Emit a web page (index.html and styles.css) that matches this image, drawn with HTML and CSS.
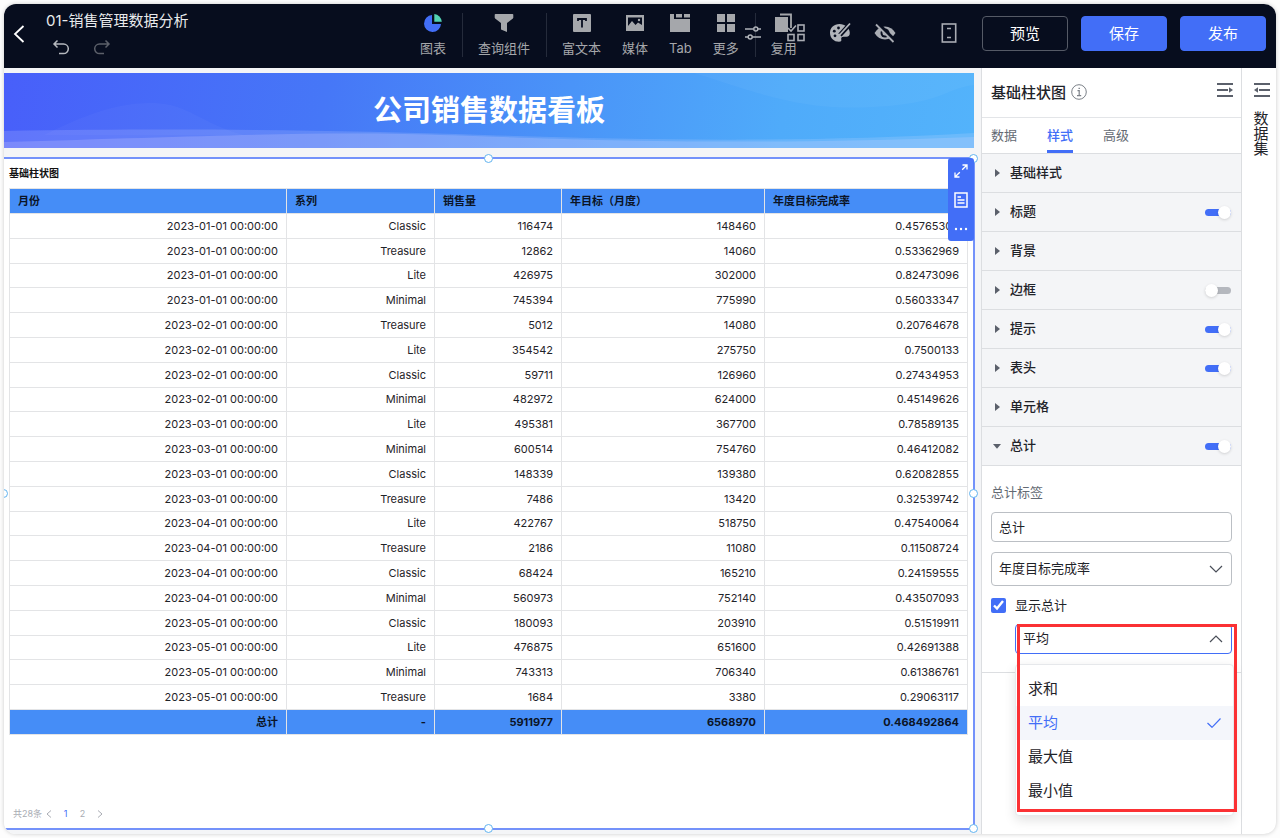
FILE: index.html
```html
<!DOCTYPE html>
<html lang="zh-CN">
<head>
    <meta charset="UTF-8">
    <meta name="viewport" content="width=device-width, initial-scale=1.0">
    <title>01-销售管理数据分析</title>
    <link rel="stylesheet" href="styles.css">
</head>
<body>
    <div class="window">
        <header class="topbar">
            <div class="topbar-left">
                <button class="icon-btn" aria-label="返回">
                    <svg width="12" height="20" viewBox="0 0 12 20" fill="none" stroke="#fff" stroke-width="1.8"><path d="M10.5 2 2 10l8.500 8"/></svg>
                </button>
                <div class="doc">
                    <h1>01-销售管理数据分析</h1>
                    <div class="history">
                        <button class="icon-btn" aria-label="撤销">
                            <svg width="18" height="18" viewBox="0 0 18 18" fill="none" stroke="#b5b8be" stroke-width="1.500"><path d="M5.500 1.500 2 5l3.500 3.500M2 5h9.500a4.800 4.800 0 0 1 0 9.600H7"/></svg>
                        </button>
                        <button class="icon-btn" aria-label="重做">
                            <svg width="18" height="18" viewBox="0 0 18 18" fill="none" stroke="#5c606a" stroke-width="1.500"><path d="M12.500 1.500 16 5l-3.500 3.500M16 5H6.500a4.800 4.800 0 0 0 0 9.600H11"/></svg>
                        </button>
                    </div>
                </div>
            </div>

            <nav class="insert">
                <button class="insert-btn">
                    <svg width="20" height="20" viewBox="0 0 20 20"><path d="M9 2a8.500 8.500 0 1 0 9 9H9z" fill="#426ef7"/><path d="M11.300 1a8.500 8.500 0 0 1 7.500 7.700h-7.500z" fill="#52d3b4"/></svg>
                    图表
                </button>
                <span class="divider"></span>
                <button class="insert-btn">
                    <svg width="20" height="20" viewBox="0 0 20 20" fill="#a5a7ab"><path d="M1.500 1h17q.8 0 .8.800v2.700q0 .5-.4.900L13 10v9l-6-2.500V10L1.100 5.400q-.4-.4-.4-.9V1.800q0-.8.800-.8z"/></svg>
                    查询组件
                </button>
                <span class="divider"></span>
                <button class="insert-btn">
                    <svg width="20" height="20" viewBox="0 0 20 20"><rect x="1" y="1" width="18" height="18" rx="1" fill="#a5a7ab"/><path d="M6 8V6h8v2M10 6v8.500" fill="none" stroke="#070d1e" stroke-width="1.800"/></svg>
                    富文本
                </button>
                <button class="insert-btn">
                    <svg width="20" height="20" viewBox="0 0 20 20"><rect x="1" y="2" width="18" height="16" fill="#a5a7ab"/><path d="M3 4.500h14V12l-4-2.500-2.500 2.500L7 8l-4 5z" fill="#070d1e"/><circle cx="14" cy="7" r="1.200" fill="#a5a7ab"/></svg>
                    媒体
                </button>
                <button class="insert-btn">
                    <svg width="22" height="20" viewBox="0 0 22 20" fill="#a5a7ab"><path d="M1 1h4v5h16v13H1z"/><path d="M7 1h6v3.500H7zM15 1h6v3.500h-6z"/></svg>
                    Tab
                </button>
                <button class="insert-btn">
                    <svg width="20" height="20" viewBox="0 0 20 20" fill="#a5a7ab"><path d="M1 1h8v8H1zM11 1h8v8h-8zM1 11h8v8H1zM11 11h8v8h-8z"/></svg>
                    更多
                </button>
                <span class="divider"></span>
                <button class="insert-btn">
                    <svg width="20" height="20" viewBox="0 0 20 20"><rect x="1" y="4" width="13" height="15" fill="#a5a7ab"/><path d="M6 1.500h11V15" fill="none" stroke="#a5a7ab" stroke-width="1.800"/></svg>
                    复用
                </button>
            </nav>

            <div class="tools">
                <button class="icon-btn" aria-label="筛选设置">
                    <svg width="20" height="20" viewBox="0 0 20 20" fill="none" stroke="#b0b3b9" stroke-width="1.500"><path d="M2 6h8.500M15 6h3M2 14h3M9.500 14H18"/><circle cx="12.800" cy="6" r="2"/><circle cx="7.200" cy="14" r="2"/></svg>
                </button>
                <button class="icon-btn" aria-label="批量操作">
                    <svg width="20" height="20" viewBox="0 0 20 20" fill="none" stroke="#a9acb3" stroke-width="1.600"><path d="M2 5l3 3 5-5.500"/><rect x="12" y="2" width="6" height="6"/><rect x="2" y="11.500" width="6" height="6"/><rect x="12" y="11.500" width="6" height="6"/></svg>
                </button>
                <button class="icon-btn" aria-label="主题">
                    <svg width="22" height="22" viewBox="0 0 22 22"><path d="M10.500 2C5 2 1 5.600 1 11c0 5 4 8.800 9 8.800 2 0 2.600-1 2.300-2.300-.4-1.800.4-2.800 2.200-2.800h3c2 0 3.500-1.600 3.300-4C20.500 5.500 16 2 10.500 2z" fill="#b0b3b9"/><path d="M20.500 2.500 11 13" stroke="#070d1e" stroke-width="4.500"/><path d="M21 1.500 11.500 12l-2.500 2.500" stroke="#b0b3b9" stroke-width="1.800"/><g fill="#070d1e"><circle cx="5.300" cy="9.200" r="1.400"/><circle cx="9.500" cy="6" r="1.400"/><circle cx="6" cy="13.800" r="1.400"/></g></svg>
                </button>
                <button class="icon-btn" aria-label="隐藏">
                    <svg width="22" height="20" viewBox="0 0 22 20"><path d="M.500 10Q4.500 3.500 11 3.500T21.500 10Q17.500 16.500 11 16.500T.5 10z" fill="#a9acb3"/><circle cx="11" cy="10" r="4.500" fill="#070d1e"/><circle cx="11" cy="10" r="2.500" fill="#a9acb3"/><path d="M3.500.5 20.500 17.500" stroke="#070d1e" stroke-width="4"/><path d="M2 1.500 19.500 19" stroke="#a9acb3" stroke-width="1.800"/></svg>
                </button>
                <button class="icon-btn device" aria-label="移动端">
                    <svg width="20" height="20" viewBox="0 0 20 20" fill="none" stroke="#a9acb3" stroke-width="1.600"><rect x="3.300" y="1" width="13.400" height="18"/><path d="M8 5.500h4M8 14.500h4"/></svg>
                </button>
                <div class="actions">
                    <button class="btn btn-outline">预览</button>
                    <button class="btn btn-primary">保存</button>
                    <button class="btn btn-primary">发布</button>
                </div>
            </div>
        </header>

        <div class="workspace">
            <main class="canvas">
                <div class="banner">
                    <svg class="banner-waves" viewBox="0 0 970 75" preserveAspectRatio="none">
                        <path d="M40 62C80 42 115 29 150 30S195 50 240 62z" fill="#fff" opacity=".03"/>
                        <path d="M0 58C180 55 330 57 480 62S800 70 970 60V75H0z" fill="#dfe2ff" opacity=".17"/>
                        <path d="M0 69C180 64 290 59 400 61S680 75 970 64V75H0z" fill="#e4dcff" opacity=".2"/>
                        <path d="M690 0C760 22 800 38 870 34S940 16 970 12V0z" fill="#fff" opacity=".04"/>
                    </svg>
                    <h2>公司销售数据看板</h2>
                </div>

                <section class="widget">
                    <h3>基础柱状图</h3>
                    <table class="grid">
                        <colgroup>
                            <col class="col-month">
                            <col class="col-series">
                            <col class="col-sales">
                            <col class="col-goal">
                            <col class="col-rate">
                        </colgroup>
                        <thead>
                            <tr><th>月份</th><th>系列</th><th>销售量</th><th>年目标（月度）</th><th>年度目标完成率</th></tr>
                        </thead>
                        <tbody>
                            <tr><td>2023-01-01 00:00:00</td><td>Classic</td><td>116474</td><td>148460</td><td>0.45765306</td></tr>
                            <tr><td>2023-01-01 00:00:00</td><td>Treasure</td><td>12862</td><td>14060</td><td>0.53362969</td></tr>
                            <tr><td>2023-01-01 00:00:00</td><td>Lite</td><td>426975</td><td>302000</td><td>0.82473096</td></tr>
                            <tr><td>2023-01-01 00:00:00</td><td>Minimal</td><td>745394</td><td>775990</td><td>0.56033347</td></tr>
                            <tr><td>2023-02-01 00:00:00</td><td>Treasure</td><td>5012</td><td>14080</td><td>0.20764678</td></tr>
                            <tr><td>2023-02-01 00:00:00</td><td>Lite</td><td>354542</td><td>275750</td><td>0.7500133</td></tr>
                            <tr><td>2023-02-01 00:00:00</td><td>Classic</td><td>59711</td><td>126960</td><td>0.27434953</td></tr>
                            <tr><td>2023-02-01 00:00:00</td><td>Minimal</td><td>482972</td><td>624000</td><td>0.45149626</td></tr>
                            <tr><td>2023-03-01 00:00:00</td><td>Lite</td><td>495381</td><td>367700</td><td>0.78589135</td></tr>
                            <tr><td>2023-03-01 00:00:00</td><td>Minimal</td><td>600514</td><td>754760</td><td>0.46412082</td></tr>
                            <tr><td>2023-03-01 00:00:00</td><td>Classic</td><td>148339</td><td>139380</td><td>0.62082855</td></tr>
                            <tr><td>2023-03-01 00:00:00</td><td>Treasure</td><td>7486</td><td>13420</td><td>0.32539742</td></tr>
                            <tr><td>2023-04-01 00:00:00</td><td>Lite</td><td>422767</td><td>518750</td><td>0.47540064</td></tr>
                            <tr><td>2023-04-01 00:00:00</td><td>Treasure</td><td>2186</td><td>11080</td><td>0.11508724</td></tr>
                            <tr><td>2023-04-01 00:00:00</td><td>Classic</td><td>68424</td><td>165210</td><td>0.24159555</td></tr>
                            <tr><td>2023-04-01 00:00:00</td><td>Minimal</td><td>560973</td><td>752140</td><td>0.43507093</td></tr>
                            <tr><td>2023-05-01 00:00:00</td><td>Classic</td><td>180093</td><td>203910</td><td>0.51519911</td></tr>
                            <tr><td>2023-05-01 00:00:00</td><td>Lite</td><td>476875</td><td>651600</td><td>0.42691388</td></tr>
                            <tr><td>2023-05-01 00:00:00</td><td>Minimal</td><td>743313</td><td>706340</td><td>0.61386761</td></tr>
                            <tr><td>2023-05-01 00:00:00</td><td>Treasure</td><td>1684</td><td>3380</td><td>0.29063117</td></tr>
                        </tbody>
                        <tfoot>
                            <tr><td>总计</td><td>-</td><td>5911977</td><td>6568970</td><td>0.468492864</td></tr>
                        </tfoot>
                    </table>

                    <div class="pager">
                        <span class="count">共28条</span>
                        <button aria-label="上一页"><svg width="6" height="8" viewBox="0 0 6 8" fill="none" stroke="#a9acb3"><path d="M5 .5 1 4l4 3.500"/></svg></button>
                        <button class="current">1</button>
                        <button>2</button>
                        <button aria-label="下一页"><svg width="6" height="8" viewBox="0 0 6 8" fill="none" stroke="#a9acb3"><path d="M1 .5 5 4 1 7.500"/></svg></button>
                    </div>

                    <span class="handle top center"></span>
                    <span class="handle top right"></span>
                    <span class="handle middle left"></span>
                    <span class="handle middle right"></span>
                    <span class="handle bottom center"></span>
                    <span class="handle bottom right"></span>

                    <div class="widget-tools">
                        <button class="icon-btn" aria-label="放大">
                            <svg width="14" height="14" viewBox="0 0 14 14" fill="none" stroke="#fff" stroke-width="1.300"><path d="M8.500 1H13v4.500M13 1 8.200 5.800M1 8.500V13h4.500M1 13l4.800-4.800"/></svg>
                        </button>
                        <button class="icon-btn" aria-label="查看数据">
                            <svg width="14" height="16" viewBox="0 0 14 16" fill="none" stroke="#fff" stroke-width="1.500"><rect x="1" y="1" width="12" height="14"/><path d="M3.500 5h3.500M3.500 8h7M3.500 11h7"/></svg>
                        </button>
                        <button class="icon-btn" aria-label="更多">
                            <svg width="14" height="14" viewBox="0 0 14 14" fill="#fff"><circle cx="2" cy="8" r="1.200"/><circle cx="7" cy="8" r="1.200"/><circle cx="12" cy="8" r="1.200"/></svg>
                        </button>
                    </div>
                </section>
            </main>

            <aside class="panel">
                <div class="panel-header">
                    <h2>基础柱状图</h2>
                    <svg width="16" height="16" viewBox="0 0 16 16" fill="none" stroke="#7b8088"><circle cx="8" cy="8" r="7.300"/><path d="M6.500 6.700h1.700v5M6 11.700h4.200M7.500 4.300h1.400" stroke-width="1.200"/></svg>
                    <button class="icon-btn collapse" aria-label="收起">
                        <svg width="16" height="14" viewBox="0 0 16 14"><path d="M0 1h16M0 7h11M0 13h16" stroke="#5b606b" stroke-width="2"/><path d="M12 4.300 16 7l-4 2.700z" fill="#5b606b"/></svg>
                    </button>
                </div>
                <nav class="tabs">
                    <button>数据</button>
                    <button class="active">样式</button>
                    <button>高级</button>
                </nav>

                <div class="section"><i class="caret"></i><span>基础样式</span></div>
                <div class="section"><i class="caret"></i><label for="swTitle">标题</label><input type="checkbox" class="switch" id="swTitle" checked></div>
                <div class="section"><i class="caret"></i><span>背景</span></div>
                <div class="section"><i class="caret"></i><label for="swBorder">边框</label><input type="checkbox" class="switch" id="swBorder"></div>
                <div class="section"><i class="caret"></i><label for="swTip">提示</label><input type="checkbox" class="switch" id="swTip" checked></div>
                <div class="section"><i class="caret"></i><label for="swHead">表头</label><input type="checkbox" class="switch" id="swHead" checked></div>
                <div class="section"><i class="caret"></i><span>单元格</span></div>
                <div class="section"><i class="caret open"></i><label for="swTotal">总计</label><input type="checkbox" class="switch" id="swTotal" checked></div>

                <div class="section-body">
                    <label class="field-label" for="totalLabel">总计标签</label>
                    <input type="text" class="field" id="totalLabel" value="总计">
                    <div class="select-wrap">
                        <select class="field tall" aria-label="指标">
                            <option>年度目标完成率</option>
                        </select>
                        <svg class="arrow" width="14" height="8" viewBox="0 0 14 8" fill="none" stroke="#4a4f59" stroke-width="1.200"><path d="M1 1l6 6 6-6"/></svg>
                    </div>
                    <div class="check-row">
                        <input type="checkbox" id="showTotal" checked>
                        <label for="showTotal">显示总计</label>
                    </div>
                    <div class="select-wrap nested">
                        <select class="field focused" aria-label="总计方式">
                            <option>求和</option>
                            <option selected>平均</option>
                            <option>最大值</option>
                            <option>最小值</option>
                        </select>
                        <svg class="arrow" width="14" height="8" viewBox="0 0 14 8" fill="none" stroke="#4a4f59" stroke-width="1.200"><path d="M1 7l6-6 6 6"/></svg>
                        <ul class="menu" role="listbox">
                            <li role="option">求和</li>
                            <li role="option" class="selected" aria-selected="true">平均
                                <svg width="14" height="10" viewBox="0 0 14 10" fill="none" stroke="#426ef7" stroke-width="1.200"><path d="M.500 5 5 9.300 13.500.5"/></svg>
                            </li>
                            <li role="option">最大值</li>
                            <li role="option">最小值</li>
                        </ul>
                        <span class="highlight"></span>
                    </div>
                </div>
            </aside>

            <aside class="rail">
                <button class="icon-btn" aria-label="展开">
                    <svg width="16" height="14" viewBox="0 0 16 14"><path d="M0 1h16M5 7h11M0 13h16" stroke="#5b606b" stroke-width="2"/><path d="M4 4.300 0 7l4 2.700z" fill="#5b606b"/></svg>
                </button>
                <span>数据集</span>
            </aside>
        </div>
    </div>
</body>
</html>
```
FILE: styles.css
```css
* {
    margin: 0;
    padding: 0;
    box-sizing: border-box;
}

body {
    height: 100vh;
    padding: 4px;
    background: #fdfdfd;
    color: #1f2329;
    font-family: Inter, "Noto Sans CJK SC", sans-serif;
    font-size: 13px;
}

button,
input,
select {
    font: inherit;
    color: inherit;
}

button {
    border: none;
    background: none;
    cursor: pointer;
}

svg {
    display: block;
    flex-shrink: 0;
}

.icon-btn {
    display: flex;
    align-items: center;
    justify-content: center;
}

.window {
    display: flex;
    flex-direction: column;
    height: 100%;
    border-radius: 12px;
    background: #fff;
    box-shadow: 0 0 4px rgba(0, 0, 0, 0.2);
    overflow: hidden;
}

/* top bar */
.topbar {
    display: flex;
    flex-shrink: 0;
    height: 64px;
    padding-bottom: 2px;
    background: #070d1e;
    color: #a5a7ab;
}

.topbar-left {
    display: flex;
    align-items: center;
    gap: 21px;
    width: 416px;
    padding: 0 9px 2px;
}

.doc {
    display: flex;
    flex-direction: column;
    gap: 8px;
}

.doc h1 {
    color: #e9eaec;
    font-size: 15px;
    font-weight: 400;
    line-height: 20px;
}

.history {
    display: flex;
    gap: 23px;
    padding-left: 6px;
}

.insert {
    display: flex;
    align-items: center;
    gap: 16px;
    white-space: nowrap;
}

.insert-btn {
    display: flex;
    flex-direction: column;
    align-items: center;
    gap: 6px;
    line-height: 18px;
}

.insert-btn + .insert-btn {
    margin-left: 5px;
}

.insert-btn svg {
    margin: 0 -4px;
}

.divider {
    width: 1px;
    height: 44px;
    margin-right: -1px;
    background: #252b3b;
}

.tools {
    display: flex;
    flex: 1;
    align-items: center;
    justify-content: flex-end;
    gap: 23px;
    margin-left: -60px;
    padding: 0 10px 4px 0;
}

.device {
    margin-left: 20px;
}

.actions {
    display: flex;
    gap: 13px;
}

.btn {
    width: 86px;
    height: 35px;
    padding-bottom: 1px;
    border: 1px solid #426ef7;
    border-radius: 4px;
    color: #fff;
    font-size: 15px;
}

.btn-primary {
    background: #426ef7;
}

.btn-outline {
    border-color: #555a66;
}

/* workspace */
.workspace {
    display: flex;
    flex: 1;
    min-height: 0;
}

.canvas {
    display: flex;
    flex: 1;
    flex-direction: column;
    gap: 9px;
    min-width: 0;
    padding: 5px 6px 4px 0;
    background: #f4f5f7;
}

.banner {
    position: relative;
    display: flex;
    align-items: center;
    justify-content: center;
    height: 75px;
    margin-right: 1px;
    background: linear-gradient(100deg, #485ffa 0%, #4677f7 33%, #4a94f8 58%, #4fabfa 80%, #53b3fb 100%);
}

.banner-waves {
    position: absolute;
    inset: 0;
    width: 100%;
    height: 100%;
}

.banner h2 {
    position: relative;
    color: #fff;
    font-size: 29px;
    font-weight: 700;
    line-height: 40px;
}

.widget {
    position: relative;
    display: flex;
    flex: 1;
    flex-direction: column;
    padding: 0 7px 8px 5px;
    border: 2px solid #7492fa;
    border-left: none;
    background: #fff;
}

.widget h3 {
    color: #111;
    font-size: 10px;
    font-weight: 700;
    line-height: 29px;
}

.grid {
    width: 100%;
    height: 547px;
    border-collapse: collapse;
    table-layout: fixed;
    font-size: 11px;
    line-height: 16px;
}

.grid thead tr,
.grid tfoot tr {
    height: 25px;
}

.col-month {
    width: 277px;
}

.col-series {
    width: 148px;
}

.col-sales {
    width: 127px;
}

.col-goal,
.col-rate {
    width: 203px;
}

.grid th,
.grid td {
    padding: 0 8px;
    border: 1px solid #e3e4e6;
}

.grid th {
    background: #458df7;
    color: #0b1426;
    font-weight: 700;
    text-align: left;
}

.grid td {
    text-align: right;
}

.grid tfoot td {
    background: #458df7;
    color: #0b1426;
    font-weight: 700;
}

.pager {
    display: flex;
    align-items: center;
    gap: 6px;
    margin-top: auto;
    padding-left: 4px;
    color: #a9acb3;
    font-size: 9px;
    line-height: 12px;
}

.pager .count {
    margin-right: -5px;
}

.pager button {
    display: flex;
    justify-content: center;
    min-width: 11px;
}

.pager .current {
    color: #426ef7;
}

.handle {
    position: absolute;
    width: 9px;
    height: 9px;
    margin: -5px;
    border: 1px solid #62b4f0;
    border-radius: 50%;
    background: #fff;
}

.handle.top {
    top: 0;
}

.handle.middle {
    top: 50%;
}

.handle.bottom {
    bottom: 0;
}

.handle.left {
    left: 0;
}

.handle.center {
    left: 50%;
}

.handle.right {
    right: 0;
}

.widget-tools {
    position: absolute;
    top: -1px;
    right: -1px;
    display: flex;
    flex-direction: column;
    align-items: center;
    justify-content: space-between;
    width: 26px;
    height: 83px;
    padding: 6px 0;
    border-radius: 3px;
    background: #426ef7;
}

/* settings panel */
.panel {
    flex: 0 0 261px;
    border: solid #dcdee1;
    border-width: 0 1px;
}

.panel-header {
    display: flex;
    align-items: center;
    gap: 5px;
    height: 50px;
    padding: 0 8px 2px 9px;
    border-bottom: 1px solid #e3e5e8;
}

.panel-header h2 {
    font-size: 15px;
    font-weight: 500;
}

.collapse {
    margin-left: auto;
    padding-bottom: 4px;
}

.tabs {
    display: flex;
    gap: 30px;
    height: 36px;
    padding: 0 9px;
    border-bottom: 1px solid #dcdee1;
    color: #646a73;
}

.tabs button {
    border-bottom: 3px solid transparent;
}

.tabs .active {
    border-color: #426ef7;
    color: #426ef7;
    font-weight: 500;
}

.section {
    display: flex;
    align-items: center;
    gap: 8px;
    height: 39px;
    padding: 0 10px;
    border-bottom: 1px solid #dcdee1;
    background: #f4f5f7;
    font-weight: 500;
}

.section span,
.section label {
    padding-bottom: 3px;
}

.caret {
    width: 10px;
    height: 8px;
    background: #5b606b;
    clip-path: polygon(30% 0, 80% 50%, 30% 100%);
}

.caret.open {
    clip-path: polygon(10% 25%, 90% 25%, 50% 85%);
}

.switch {
    position: relative;
    width: 26px;
    height: 7px;
    margin-left: auto;
    border-radius: 4px;
    background: #b5b8be;
    appearance: none;
}

.switch::after {
    content: "";
    position: absolute;
    top: -3px;
    left: 0;
    width: 13px;
    height: 13px;
    border-radius: 50%;
    background: #fff;
    box-shadow: 0 1px 3px rgba(0, 0, 0, 0.15);
}

.switch:checked {
    background: #426ef7;
}

.switch:checked::after {
    left: 13px;
}

.section-body {
    display: flex;
    flex-direction: column;
    gap: 10px;
    padding: 16px 9px 18px;
    border-bottom: 1px solid #dcdee1;
}

.field-label {
    color: #646a73;
    line-height: 20px;
}

.field {
    display: block;
    width: 100%;
    height: 30px;
    padding: 0 7px 2px;
    border: 1px solid #bbbfc4;
    border-radius: 4px;
    background: #fff;
    appearance: none;
}

.field.tall {
    height: 34px;
}

.field.focused {
    border-color: #426ef7;
}

.select-wrap {
    position: relative;
}

.arrow {
    position: absolute;
    top: calc(50% - 4px);
    right: 9px;
    pointer-events: none;
}

.check-row {
    display: flex;
    align-items: center;
    gap: 9px;
    line-height: 18px;
}

.check-row input {
    width: 15px;
    height: 15px;
    accent-color: #426ef7;
}

.nested {
    margin-left: 24px;
}

.menu {
    position: absolute;
    top: 40px;
    left: 0;
    right: -2px;
    padding: 7px 0;
    border: 1px solid #e6e8eb;
    border-radius: 4px;
    background: #fff;
    box-shadow: 0 4px 12px rgba(0, 0, 0, 0.12);
    font-size: 15px;
    line-height: 34px;
    list-style: none;
}

.menu li {
    display: flex;
    align-items: center;
    justify-content: space-between;
    padding: 0 12px;
}

.menu .selected {
    background: #f4f6fb;
    color: #426ef7;
}

/* callout around the open drop-down */
.highlight {
    position: absolute;
    top: 0;
    left: 2px;
    right: -5px;
    height: 188px;
    border: 3px solid #fb3134;
    pointer-events: none;
}

.rail {
    display: flex;
    flex: 0 0 34px;
    flex-direction: column;
    align-items: center;
    gap: 14px;
    padding: 15px 0 0 6px;
    font-size: 15px;
    line-height: 15px;
}

.rail span {
    width: 17px;
}
```
